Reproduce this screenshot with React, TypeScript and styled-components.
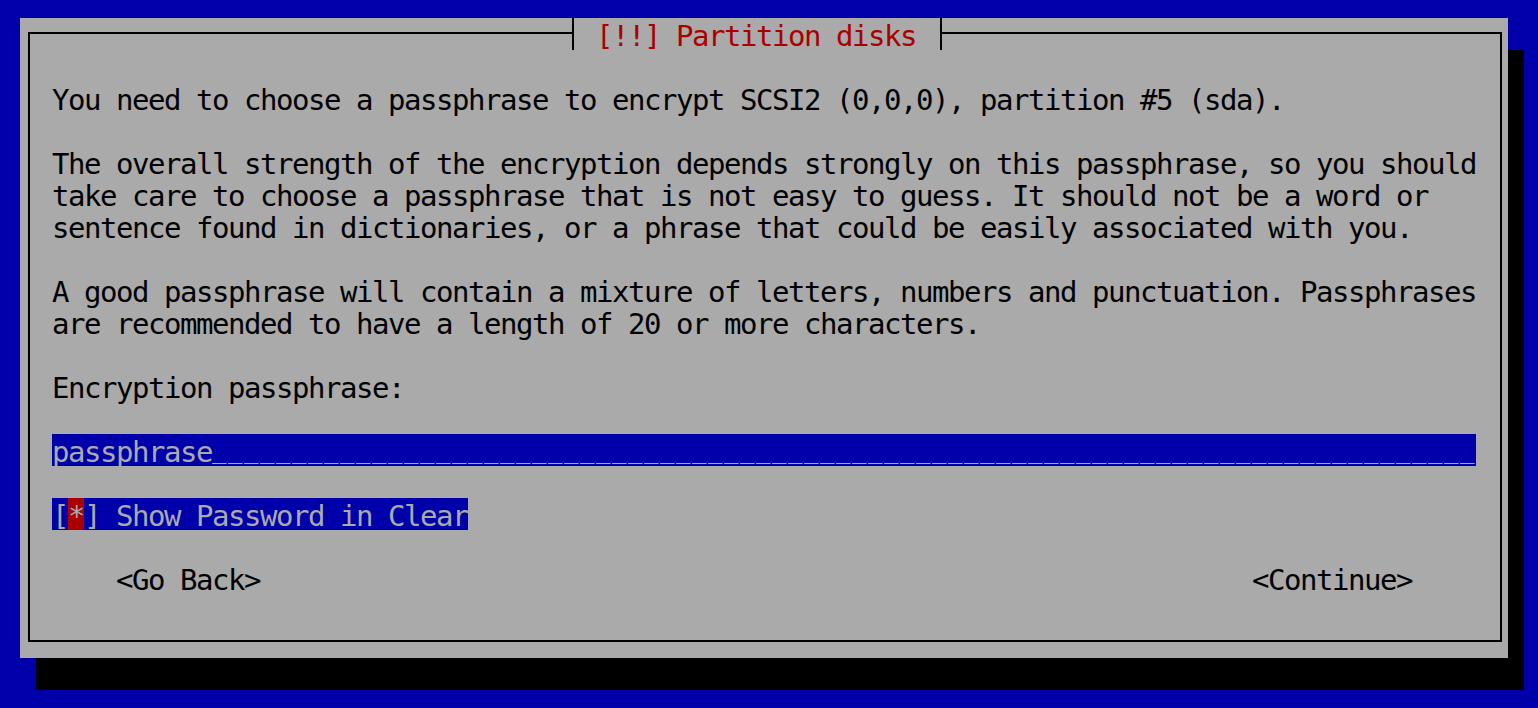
import React from "react";
import styled, { createGlobalStyle } from "styled-components";

const BLUE = "#0000aa";
const GREY = "#aaaaaa";
const RED = "#aa0000";
const BLACK = "#000000";

const Global = createGlobalStyle`
  html, body { margin: 0; padding: 0; background: ${BLUE}; }
  body { font-family: "DejaVu Sans Mono", "Liberation Mono", monospace; }
`;

const Screen = styled.div`
  width: 1538px;
  height: 708px;
  box-sizing: border-box;
  padding: 18px 0 0 20px;
  background: ${BLUE};
  overflow: hidden;
`;

const Dialog = styled.div`
  width: 1488px;
  height: 640px;
  box-sizing: border-box;
  padding: 14px 6px 16px 8px;
  background: ${GREY};
  box-shadow: 16px 32px 0 ${BLACK};
  font-family: "DejaVu Sans Mono", "Liberation Mono", monospace;
  font-size: 29px;
  letter-spacing: -1.459px;
  line-height: 36px;
  white-space: pre;
  color: ${BLACK};
`;

const Frame = styled.div`
  position: relative;
  height: 100%;
  box-sizing: border-box;
  border: 2px solid ${BLACK};
  padding: 48px 24px 0 22px;
  display: flex;
  flex-direction: column;
  gap: 32px;
`;

const Title = styled.div`
  position: absolute;
  top: -16px;
  left: 542px;
  height: 32px;
  padding: 0 24px 0 22px;
  border-left: 2px solid ${BLACK};
  border-right: 2px solid ${BLACK};
  background: ${GREY};
  color: ${RED};
`;

const Para = styled.div`
  display: flex;
  flex-direction: column;
`;

const Line = styled.div`
  height: 32px;
`;

const Input = styled.div`
  width: 1424px;
  height: 32px;
  background: ${BLUE};
  color: ${GREY};
`;

const Fill = styled.span`
  font-size: 24px;
  letter-spacing: 1.551px;
  line-height: 32px;
  vertical-align: top;
`;

const Check = styled.div`
  align-self: flex-start;
  height: 32px;
  background: ${BLUE};
  color: ${GREY};
`;

const Cursor = styled.span`
  display: inline-block;
  height: 32px;
  vertical-align: top;
  background: ${RED};
  color: ${GREY};
`;

const Buttons = styled.div`
  display: flex;
  justify-content: space-between;
  padding: 0 64px;
  height: 32px;
`;

export default function App() {
  return (
    <>
      <Global />
      <Screen>
        <Dialog>
          <Frame>
            <Title>[!!] Partition disks</Title>
            <Para>
              <Line>You need to choose a passphrase to encrypt SCSI2 (0,0,0), partition #5 (sda).</Line>
            </Para>
            <Para>
              <Line>The overall strength of the encryption depends strongly on this passphrase, so you should</Line>
              <Line>take care to choose a passphrase that is not easy to guess. It should not be a word or</Line>
              <Line>sentence found in dictionaries, or a phrase that could be easily associated with you.</Line>
            </Para>
            <Para>
              <Line>A good passphrase will contain a mixture of letters, numbers and punctuation. Passphrases</Line>
              <Line>are recommended to have a length of 20 or more characters.</Line>
            </Para>
            <Para>
              <Line>Encryption passphrase:</Line>
            </Para>
            <Input>
              passphrase<Fill>{"_".repeat(79)}</Fill>
            </Input>
            <Check>
              [<Cursor>*</Cursor>] Show Password in Clear
            </Check>
            <Buttons>
              <span>&lt;Go Back&gt;</span>
              <span>&lt;Continue&gt;</span>
            </Buttons>
          </Frame>
        </Dialog>
      </Screen>
    </>
  );
}
